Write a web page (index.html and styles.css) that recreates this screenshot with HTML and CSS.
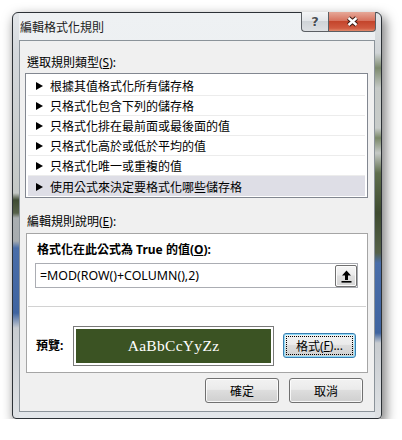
FILE: index.html
```html
<!DOCTYPE html>
<html lang="zh-Hant">
<head>
    <meta charset="UTF-8">
    <meta name="viewport" content="width=device-width, initial-scale=1.0">
    <title>編輯格式化規則</title>
    <link rel="stylesheet" href="styles.css">
</head>
<body>
    <div class="dialog">
        <div class="titlebar">
            <span class="title">編輯格式化規則</span>
            <div class="caption-buttons">
                <span class="caption-btn help">?</span>
                <span class="caption-btn close">
                    <svg width="13" height="11" viewBox="0 0 13 11">
                        <path d="M2.5 2L10.5 9M10.5 2L2.5 9" stroke="#3a1a12" stroke-width="4.4"/>
                        <path d="M2.5 2L10.5 9M10.5 2L2.5 9" stroke="#fff" stroke-width="2.4"/>
                    </svg>
                </span>
            </div>
        </div>

        <div class="client">
            <div class="label">選取規則類型(<u>S</u>):</div>
            <ul class="rule-list">
                <li><i class="arrow"></i>根據其值格式化所有儲存格</li>
                <li><i class="arrow"></i>只格式化包含下列的儲存格</li>
                <li><i class="arrow"></i>只格式化排在最前面或最後面的值</li>
                <li><i class="arrow"></i>只格式化高於或低於平均的值</li>
                <li><i class="arrow"></i>只格式化唯一或重複的值</li>
                <li class="selected"><i class="arrow"></i>使用公式來決定要格式化哪些儲存格</li>
            </ul>

            <div class="label label-desc">編輯規則說明(<u>E</u>):</div>
            <div class="group">
                <div class="bold-label">格式化在此公式為 True 的值(<u>O</u>):</div>
                <div class="formula">
                    <span class="formula-text">=MOD(ROW()+COLUMN(),2)</span>
                    <span class="ref-btn">
                        <svg width="11" height="13" viewBox="0 0 11 13">
                            <path d="M5.5 0.5L10 5.5H7V10H4V5.5H1Z" fill="#000"/>
                            <rect x="0.5" y="11" width="10" height="1.6" fill="#000"/>
                        </svg>
                    </span>
                </div>
                <div class="preview-row">
                    <span class="bold-label preview-label">預覽:</span>
                    <div class="preview"><div class="preview-inner">AaBbCcYyZz</div></div>
                    <button class="btn btn-focus"><span class="focus-rect">格式(<u>F</u>)...</span></button>
                </div>
            </div>

            <div class="footer">
                <button class="btn">確定</button>
                <button class="btn">取消</button>
            </div>
        </div>
    </div>
</body>
</html>
```

FILE: styles.css
```css
/* Page */
body {
    margin: 0;
    background: #fff;
    font-family: "Noto Sans", "Noto Sans CJK TC", sans-serif;
    font-size: 12px;
    color: #000;
}

/* Window frame (Aero glass) */
.dialog {
    width: 370px;
    height: 407px;
    box-sizing: border-box;
    margin: 12px 0 0 12px;
    padding: 0 6px 6px;
    border: 1px solid #2c3136;
    border-radius: 6px 6px 4px 4px;
    display: flex;
    flex-direction: column;
    background:
        linear-gradient(to bottom, #e3e6e9 0, #d4d8dc 40px, #c4c8c6 180px, #3e4b33 187px, #56614a 200px, #a9aeb1 205px, #a7acaf 228px, #4a6ea9 235px, #3f64a0 300px, #c8ccd0 315px, #dfe2e5 405px) left top / 6px 100% no-repeat,
        linear-gradient(to bottom, #e3e6e9 0, #d0d4d6 40px, #7d8a6e 55px, #c5c9c6 75px, #c8ccca 115px, #7a8868 125px, #c5c9c6 140px, #5f6e4c 160px, #3e4b30 200px, #56624a 240px, #4a6ea9 250px, #3f64a0 320px, #c8ccd0 330px, #dfe2e5 405px) right top / 6px 100% no-repeat,
        linear-gradient(to bottom, #eef1f3, #e2e6ea);
    box-shadow: 3px 5px 12px 1px rgba(0, 0, 0, .5);
}

.titlebar {
    height: 27px;
    display: flex;
    justify-content: space-between;
    align-items: flex-start;
}

.title {
    margin: 8px 0 0 1px;
    line-height: 14px;
    color: #1b1b1b;
}

.caption-buttons {
    display: flex;
    margin: -1px -1px 0 0;
}

.caption-btn {
    height: 20px;
    box-sizing: border-box;
    border: 1px solid #5b5f64;
    border-top: 0;
    display: flex;
    align-items: center;
    justify-content: center;
}

.help {
    width: 27px;
    border-radius: 0 0 0 4px;
    border-right: 0;
    background: linear-gradient(to bottom, #f4f5f6, #e3e6e9 45%, #cfd3d7 50%, #dde0e3);
    font: bold 13px "DejaVu Sans", sans-serif;
    color: #4a4e52;
    text-shadow: 0 0 1px #fff, 0 0 1px #fff;
}

.close {
    width: 48px;
    border-radius: 0 0 4px 0;
    background: linear-gradient(to bottom, #e6a898, #d7735f 45%, #c4452c 50%, #d05a40 85%, #e08a6c);
}

/* Client area */
.client {
    flex: 1;
    border: 1px solid #8b939a;
    background: #f0f0f0;
}

.label {
    margin: 14px 0 2px 7px;
    line-height: 16px;
}

.label-desc {
    margin: 16px 0 3px 7px;
}

/* Rule type list */
.rule-list {
    list-style: none;
    margin: 0 6px 0 5px;
    padding: 2px 2px 1px;
    border: 1px solid #828790;
    background: #fff;
}

.rule-list li {
    height: 20px;
    box-sizing: border-box;
    padding: 1px 0 0 8px;
    border-bottom: 1px solid #ececec;
    display: flex;
    align-items: center;
}

.rule-list li.selected {
    border-bottom: 0;
    background: #dedee6;
}

.arrow {
    width: 0;
    height: 0;
    border-left: 7px solid #000;
    border-top: 4px solid transparent;
    border-bottom: 4px solid transparent;
    margin-right: 7px;
}

/* Rule description group */
.group {
    margin: 0 6px;
    height: 140px;
    box-sizing: border-box;
    border: 1px solid #a5a5a5;
    background: #fff;
}

.bold-label {
    font-weight: bold;
    line-height: 16px;
}

.group > .bold-label {
    margin: 8px 0 5px 10px;
}

.formula {
    margin: 0 9px 0 8px;
    height: 25px;
    box-sizing: border-box;
    border: 1px solid #abadb3;
    display: flex;
    justify-content: space-between;
    align-items: flex-start;
}

.formula-text {
    padding: 3px 0 0 4px;
    font-size: 12.4px;
    line-height: 17px;
}

.ref-btn {
    width: 22px;
    height: 22px;
    margin-top: 1px;
    box-sizing: border-box;
    border: 1px solid #707070;
    border-radius: 2px;
    background: linear-gradient(to bottom, #f6f6f6, #ececec 45%, #dfdfdf 50%, #d6d6d6);
    box-shadow: inset 0 0 0 1px #fcfcfc;
    display: flex;
    align-items: center;
    justify-content: center;
}

.preview-row {
    margin: 18px 1px 0;
    height: 65px;
    box-sizing: border-box;
    border-top: 1px solid #d2d2d2;
    padding: 19px 0 0 8px;
    display: flex;
    align-items: flex-start;
}

.preview-label {
    width: 37px;
    margin-top: 12px;
}

.preview {
    width: 201px;
    height: 40px;
    box-sizing: border-box;
    padding: 2px;
    border: 1px solid #7a7a7a;
}

.preview-inner {
    height: 100%;
    background: #3b5323;
    color: #fff;
    font-family: "Liberation Serif", serif;
    font-size: 15.5px;
    letter-spacing: 0.3px;
    display: flex;
    align-items: center;
    justify-content: center;
}

/* Buttons */
.btn {
    width: 74px;
    height: 25px;
    box-sizing: border-box;
    padding: 0;
    border: 1px solid #707070;
    border-radius: 3px;
    background: linear-gradient(to bottom, #f2f2f2, #ebebeb 45%, #dddddd 50%, #cfcfcf);
    box-shadow: inset 0 0 0 1px rgba(255, 255, 255, .8);
    font: inherit;
    color: #000;
}

.btn-focus {
    width: 73px;
    margin: 7px 0 0 9px;
    border-color: #3c7fb1;
    box-shadow: inset 0 0 0 1px #8fdcfa;
    display: flex;
    padding: 2px;
}

.focus-rect {
    flex: 1;
    outline: 1px dotted #000;
    outline-offset: -1px;
    display: flex;
    align-items: center;
    justify-content: center;
}

.footer {
    margin: 5px 11px 0 0;
    display: flex;
    justify-content: flex-end;
    gap: 10px;
}
```
